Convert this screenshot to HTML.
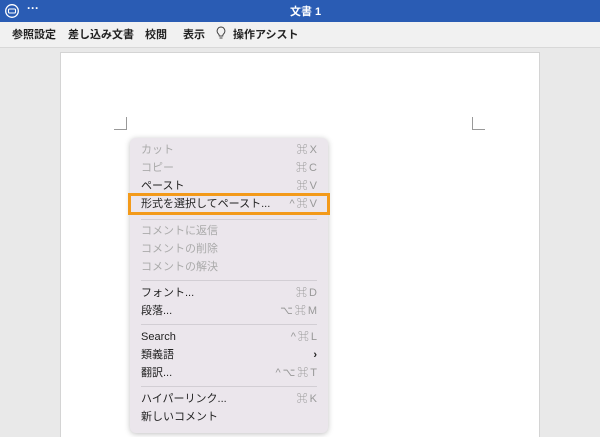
<!DOCTYPE html>
<html><head><meta charset="utf-8"><style>
*{margin:0;padding:0;box-sizing:border-box}
html,body{width:600px;height:437px;overflow:hidden}
body{background:#e9e9e9;font-family:"Liberation Sans","Noto Sans CJK JP",sans-serif;position:relative}
.top{position:absolute;left:0;top:0;width:600px;height:22px;background:#2a5cb4;color:#fff}
.tb{position:absolute;left:0;top:22px;width:600px;height:26px;background:#f1f1f1;border-bottom:1px solid #d8d8d8;font-size:11px;color:#222;font-weight:bold}
.tb span{position:absolute;top:4px}
.page{position:absolute;left:60px;top:52px;width:480px;height:400px;background:#fff;border:1px solid #d4d4d4}
.mark{position:absolute;border-color:#999;border-style:solid;width:13px;height:13px}
.menu{position:absolute;left:130px;top:138px;width:198px;height:295px;background:#ebe6ec;border-radius:6px;box-shadow:0 1px 6px rgba(0,0,0,.25);font-size:11px}
.it{position:absolute;left:11px;right:11px;height:18px;line-height:18px;color:#222}
.it b{font-weight:normal;position:absolute;right:0;top:0;color:#999;letter-spacing:2px;margin-right:-2px}
.dis{color:#aaa}
.sep{position:absolute;left:11px;right:11px;height:1px;background:#d2ced4}
.hl{position:absolute;left:128px;top:193px;width:202px;height:22px;border:3px solid #f39a1a}
</style></head><body>
<div class="top">
<svg style="position:absolute;left:5px;top:4px" width="14" height="14" viewBox="0 0 14 14"><circle cx="7" cy="7" r="6.3" fill="none" stroke="#fff" stroke-width="1.3"/><rect x="3.5" y="5" width="7" height="4" rx="1" fill="none" stroke="#fff" stroke-width="1.1"/></svg>
<span style="position:absolute;left:27px;top:1px;font-size:12px;font-weight:bold">···</span>
<span style="position:absolute;left:290px;top:3px;font-size:11px;font-weight:bold">文書 1</span>
</div>
<div class="tb">
<span style="left:12px">参照設定</span><span style="left:68px">差し込み文書</span><span style="left:145px">校閲</span><span style="left:183px">表示</span>
<svg style="position:absolute;left:216px;top:4px" width="10" height="14" viewBox="0 0 10 14"><path d="M5 1a4 4 0 0 0-2.5 7c.6.6.8 1.2.8 2h3.4c0-.8.2-1.4.8-2A4 4 0 0 0 5 1zM3.5 12h3" fill="none" stroke="#444" stroke-width="1"/></svg>
<span style="left:233px">操作アシスト</span>
</div>
<div class="page"></div>
<div class="mark" style="left:114px;top:117px;border-width:0 1px 1px 0"></div>
<div class="mark" style="left:472px;top:117px;border-width:0 0 1px 1px"></div>
<div class="menu">
<div class="it dis" style="top:3px">カット<b>⌘X</b></div>
<div class="it dis" style="top:21px">コピー<b>⌘C</b></div>
<div class="it" style="top:39px">ペースト<b>⌘V</b></div>
<div class="it" style="top:57px">形式を選択してペースト...<b>^⌘V</b></div>
<div class="sep" style="top:81px"></div>
<div class="it dis" style="top:84px">コメントに返信</div>
<div class="it dis" style="top:102px">コメントの削除</div>
<div class="it dis" style="top:120px">コメントの解決</div>
<div class="sep" style="top:142px"></div>
<div class="it" style="top:146px">フォント...<b>⌘D</b></div>
<div class="it" style="top:164px">段落...<b>⌥⌘M</b></div>
<div class="sep" style="top:186px"></div>
<div class="it" style="top:190px">Search<b>^⌘L</b></div>
<div class="it" style="top:208px">類義語<b style="color:#222;font-weight:bold">›</b></div>
<div class="it" style="top:226px">翻訳...<b>^⌥⌘T</b></div>
<div class="sep" style="top:248px"></div>
<div class="it" style="top:252px">ハイパーリンク...<b>⌘K</b></div>
<div class="it" style="top:270px">新しいコメント</div>
</div>
<div class="hl"></div>
</body></html>
